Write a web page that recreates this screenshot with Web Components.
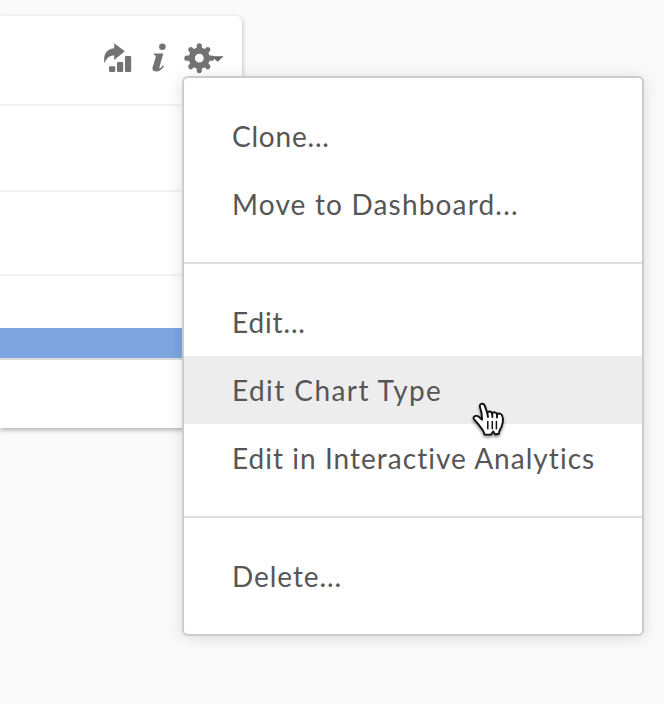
<!DOCTYPE html>
<html lang="en">
<head>
<meta charset="utf-8">
<title>Chart widget menu</title>
<style>
html,body{margin:0;height:100%;background:#fafafa;overflow:hidden}
body{font-family:Lato,"Open Sans",sans-serif;color:#565656}
</style>
</head>
<body>
<chart-page>
  <chart-card></chart-card>
  <context-menu slot="menu">
    <menu-group>
      <menu-item style="--track:.78px">Clone...</menu-item>
      <menu-item style="--track:1.17px">Move to Dashboard...</menu-item>
    </menu-group>
    <menu-group>
      <menu-item style="--track:.85px">Edit...</menu-item>
      <menu-item active style="--track:1.42px">Edit Chart Type</menu-item>
      <menu-item style="--track:1.03px">Edit in Interactive Analytics</menu-item>
    </menu-group>
    <menu-group>
      <menu-item style="--track:.93px">Delete...</menu-item>
    </menu-group>
  </context-menu>
  <hand-pointer slot="menu"></hand-pointer>
</chart-page>
<script>
const define = (name, html) => customElements.define(name, class extends HTMLElement {
  constructor() {
    super();
    this.attachShadow({mode: "open"}).innerHTML = html;
  }
});

define("chart-page", `<style>
:host{display:block;position:relative;width:664px;height:704px;padding-top:16px;box-sizing:border-box;overflow:hidden}
</style><slot></slot><slot name="menu"></slot>`);

define("chart-card", `<style>
:host{display:flex;flex-direction:column;width:242px;height:412px;background:#fff;border-radius:0 6px 0 0;box-shadow:0 2px 5px rgba(0,0,0,.3)}
header{height:88px;display:flex;box-sizing:border-box}
.row{height:84px;border-top:2px solid #f3f3f3;box-sizing:border-box}
.row.first{height:86px}
.row.last{height:54px}
.bar{height:30px;background:#7fa5e0}
.axis{height:2px;background:#dcdcdc}
card-tools{margin-left:auto}
</style>
<header><card-tools></card-tools></header>
<div class="row first"></div><div class="row"></div><div class="row last"></div>
<div class="bar"></div><div class="axis"></div>`);

define("card-tools", `<style>
:host{display:block;width:142px;height:64px}
svg{display:block}
</style>
<svg width="142" height="64" viewBox="100 16 142 64" fill="#737373">
  <path d="M114.2 43.3L124.8 51.3L114.2 60V55.4C109.5 55.4 106.5 57.5 104.5 63.4C102.8 54.8 106.5 48.7 114.2 48.2Z"/>
  <rect x="109" y="66.2" width="6.2" height="5.8" rx="1"/>
  <rect x="117" y="62" width="6.2" height="10" rx="1"/>
  <rect x="125" y="56" width="6.2" height="16" rx="1"/>
  <circle cx="162.4" cy="46.7" r="3.3"/>
  <path d="M154.2 53.6H163.3L159.5 67.1C159.2 68.4 159.7 68.8 160.5 68.1C161.4 67.3 162.1 66.3 162.8 65.2L164 66C162 69.6 159.4 71.5 156.2 71.5C153.2 71.5 151.9 69.8 152.7 67.1L155.7 56.9C156 55.8 155.7 55.2 153.7 55.1Z"/>
  <g transform="translate(199.3 58.2)">
    <path fill-rule="evenodd" d="M0-10.6A10.6 10.6 0 1 1 0 10.6A10.6 10.6 0 1 1 0-10.6ZM0-4.4A4.4 4.4 0 1 0 0 4.4A4.4 4.4 0 1 0 0-4.4Z"/>
    <path fill="none" stroke="#737373" stroke-width="5.2" stroke-linecap="round" d="M0-9V-12.4M0 9V12.4M-9 0H-12.4M9 0H12.4M6.4-6.4L8.5-8.5M-6.4-6.4L-8.5-8.5M6.4 6.4L8.5 8.5M-6.4 6.4L-8.5 8.5"/>
  </g>
  <path fill="#666" d="M211.5 56.2H223.6L217.7 61.8Z"/>
</svg>`);

define("context-menu", `<style>
:host{display:flex;flex-direction:column;position:absolute;left:182px;top:76px;width:462px;height:560px;box-sizing:border-box;background:#fff;border:2px solid #ccc;border-radius:6px;box-shadow:0 2px 16px rgba(0,0,0,.13)}
</style><slot></slot>`);

define("menu-group", `<style>
:host{display:flex;flex-direction:column;padding:24px 0}
:host(:not(:last-child)){border-bottom:2px solid #ddd}
</style><slot></slot>`);

define("menu-item", `<style>
:host{display:flex;align-items:center;height:68px;padding:0 48px;box-sizing:border-box;font-size:28px;line-height:34px;letter-spacing:var(--track,0);white-space:nowrap}
:host([active]){background:#ededed}
span{font-kerning:normal}
</style><span><slot></slot></span>`);

define("hand-pointer", `<style>
:host{position:absolute;left:468px;top:398px;width:42px;height:46px}
svg{display:block;overflow:visible;filter:drop-shadow(0 2px 1.5px rgba(0,0,0,.4))}
</style>
<svg width="42" height="46" viewBox="468 398 42 46" fill="#fff" stroke="#111" stroke-width="1.9" stroke-linejoin="round" stroke-linecap="round">
  <path d="M480.1 407.6C478.5 403.8 483.4 402 484.8 405.8L487.3 413C488.2 410.8 491.7 411.1 492.1 413.6C493.3 411.5 496.7 412.1 497 414.5C498.3 412.6 501.8 413.7 502.4 416.2C503.4 419.5 502.9 423.4 501.5 426.8C500.2 429.5 499.1 430.6 498.9 433.8L495.2 434.5L493.2 431.5L491 434.6H484.5C484 430.7 480.4 427.4 477.8 423.6C476.4 421.5 474 420.1 473.6 418.4C473.1 415.6 477.2 415.1 479.1 417L482.1 419.7C482 415.5 481.6 411.4 480.1 407.6Z"/>
  <path fill="none" d="M487.3 413L488 417M492.1 413.6L492.4 417M497 414.5V417.6"/>
  <path fill="none" stroke-width="1.5" d="M487.8 421.5V428.8M492.3 421.5V428.8M496.4 421.5V428.8"/>
</svg>`);
</script>
</body>
</html>
